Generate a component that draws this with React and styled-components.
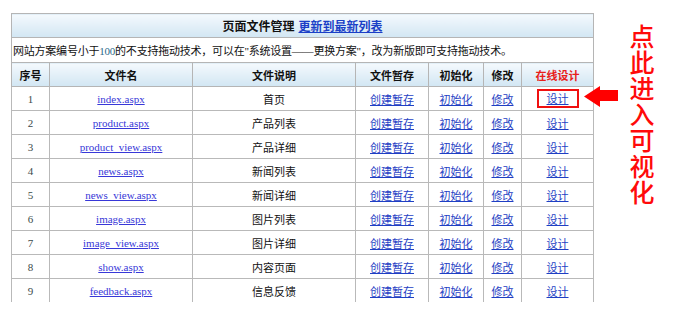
import styled, { createGlobalStyle } from "styled-components";

const GlobalStyle = createGlobalStyle`
  body {
    margin: 0;
    background: #fff;
    font-family: "Liberation Serif", "Noto Sans CJK SC", serif;
  }
`;

const Page = styled.div`
  position: relative;
  display: flex;
  align-items: flex-start;
  padding: 13px 0 0 11px;
`;

const Table = styled.table`
  width: 583px;
  border-collapse: collapse;
  table-layout: fixed;
  font-size: 11px;
  color: #111;
  border: 1px solid #b5b5b5;
  border-bottom: none;
`;

const Caption = styled.td`
  height: 23px;
  padding: 0;
  text-align: center;
  font-size: 12px;
  font-weight: bold;
  font-family: "Noto Sans CJK SC", sans-serif;
  background: linear-gradient(#f4f9fd, #d2e6f3);
  border-bottom: 1px solid #b5b5b5;

  a {
    color: #1a3fc7;
    margin-left: 4px;
  }
`;

const Notice = styled.td`
  height: 24px;
  padding: 0 0 0 1px;
  font-size: 11px;
  letter-spacing: -0.22px;
  border-bottom: 1px solid #b5b5b5;
  white-space: nowrap;

  b {
    font-weight: normal;
    color: #2a6a8a;
  }
`;

const Head = styled.th`
  height: 23px;
  padding: 0;
  font-size: 11px;
  font-weight: bold;
  font-family: "Noto Sans CJK SC", sans-serif;
  color: ${(p) => (p.$red ? "#e8201a" : "#111")};
  background: linear-gradient(#f4f9fd, #d2e6f3);
  border: 1px solid #b5b5b5;
`;

const Cell = styled.td`
  height: 23px;
  padding: 0;
  text-align: center;
  border: 1px solid #b9b9b9;
  border-bottom: ${(p) => (p.$last ? "none" : "1px solid #b9b9b9")};
  color: ${(p) => (p.$num ? "#3a4a4a" : "#111")};
`;

const FileLink = styled.a`
  color: #3838d8;
  font-size: 11px;
`;

const ActLink = styled.a`
  color: #1f3fc4;
  font-family: "Noto Sans CJK SC", sans-serif;
`;

const Marked = styled.span`
  display: inline-block;
  border: 2px solid #f01010;
  padding: 0 8px;
  line-height: 14px;
`;

const Arrow = styled.svg`
  position: absolute;
  left: 584px;
  top: 86px;
`;

const Callout = styled.div`
  margin: 11px 0 0 35px;
  writing-mode: vertical-rl;
  font-family: "Noto Sans CJK SC", sans-serif;
  font-size: 25px;
  font-weight: 500;
  line-height: 26px;
  letter-spacing: 1px;
  color: #ff0a0a;
`;

const rows = [
  ["index.aspx", "首页"],
  ["product.aspx", "产品列表"],
  ["product_view.aspx", "产品详细"],
  ["news.aspx", "新闻列表"],
  ["news_view.aspx", "新闻详细"],
  ["image.aspx", "图片列表"],
  ["image_view.aspx", "图片详细"],
  ["show.aspx", "内容页面"],
  ["feedback.aspx", "信息反馈"],
];

export default function App() {
  return (
    <>
      <GlobalStyle />
      <Page>
        <Table>
          <colgroup>
            <col style={{ width: 38 }} />
            <col style={{ width: 143 }} />
            <col style={{ width: 163 }} />
            <col style={{ width: 73 }} />
            <col style={{ width: 55 }} />
            <col style={{ width: 38 }} />
            <col style={{ width: 72 }} />
          </colgroup>
          <tbody>
            <tr>
              <Caption colSpan={7}>
                页面文件管理<a href="#">更新到最新列表</a>
              </Caption>
            </tr>
            <tr>
              <Notice colSpan={7}>
                网站方案编号小于<b>100</b>的不支持拖动技术，可以在"系统设置——更换方案"，改为新版即可支持拖动技术。
              </Notice>
            </tr>
            <tr>
              <Head>序号</Head>
              <Head>文件名</Head>
              <Head>文件说明</Head>
              <Head>文件暂存</Head>
              <Head>初始化</Head>
              <Head>修改</Head>
              <Head $red>在线设计</Head>
            </tr>
            {rows.map(([file, desc], i) => {
              const last = i === rows.length - 1;
              return (
                <tr key={file}>
                  <Cell $num $last={last}>{i + 1}</Cell>
                  <Cell $last={last}>
                    <FileLink href="#">{file}</FileLink>
                  </Cell>
                  <Cell $last={last}>{desc}</Cell>
                  <Cell $last={last}>
                    <ActLink href="#">创建暂存</ActLink>
                  </Cell>
                  <Cell $last={last}>
                    <ActLink href="#">初始化</ActLink>
                  </Cell>
                  <Cell $last={last}>
                    <ActLink href="#">修改</ActLink>
                  </Cell>
                  <Cell $last={last}>
                    {i === 0 ? (
                      <Marked>
                        <ActLink href="#">设计</ActLink>
                      </Marked>
                    ) : (
                      <ActLink href="#">设计</ActLink>
                    )}
                  </Cell>
                </tr>
              );
            })}
          </tbody>
        </Table>
        <Arrow width="34" height="21" viewBox="0 0 34 21">
          <polygon points="0,10.5 16,0 16,4 34,4 34,15 16,15 16,21" fill="#f00" />
        </Arrow>
        <Callout>点此进入可视化</Callout>
      </Page>
    </>
  );
}
